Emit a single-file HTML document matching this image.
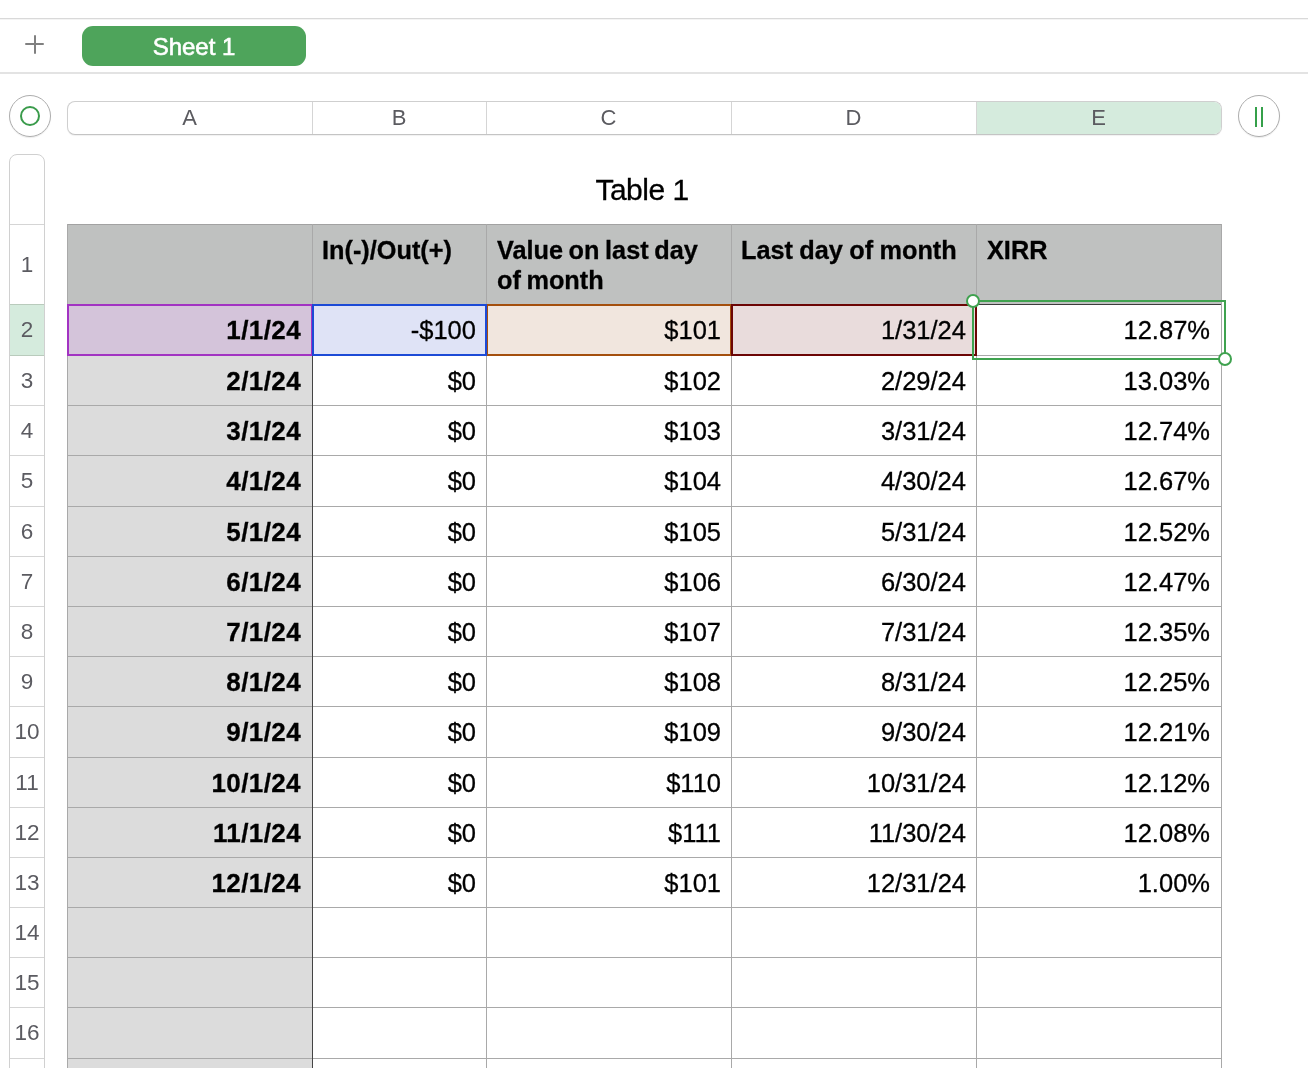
<!DOCTYPE html>
<html><head><meta charset="utf-8"><style>
html,body{margin:0;padding:0;background:#fff;width:1308px;height:1068px;overflow:hidden;position:relative;font-family:"Liberation Sans",sans-serif;}
div{position:absolute;box-sizing:border-box;}
.hl{height:1px;}
.vl{width:1px;}
.t{white-space:nowrap;color:#000;will-change:transform;-webkit-text-stroke:0.3px #000;}
.rn{left:9px;width:36px;text-align:center;font-size:22.5px;color:#5b5b61;line-height:22px;will-change:transform;}
.cl{top:104px;height:28px;text-align:center;font-size:22px;color:#5b5b60;line-height:28px;will-change:transform;}
</style></head><body>

<div class="hl" style="left:0;top:18px;width:1308px;background:#d9d9d9"></div>
<div class="hl" style="left:0;top:19px;width:1308px;background:#f4f4f4"></div>
<div style="left:0;top:72px;width:1308px;height:2px;background:#e3e3e3"></div>
<div style="left:25px;top:43px;width:19px;height:2px;background:#808080;border-radius:1px"></div>
<div style="left:34px;top:35px;width:2px;height:19px;background:#808080;border-radius:1px"></div>
<div style="left:82px;top:26px;width:224px;height:40px;background:#4ea45b;border-radius:11px;"></div>
<div class="t" style="left:82px;top:27px;width:224px;height:40px;line-height:40px;text-align:center;color:#fff;font-size:24px;font-weight:normal;-webkit-text-stroke:0.6px #fff">Sheet 1</div>
<div style="left:9px;top:95px;width:42px;height:42px;border:1.5px solid #adadad;border-radius:50%;box-shadow:0 1px 1px rgba(0,0,0,0.08)"></div>
<div style="left:20px;top:106px;width:20px;height:20px;border:2px solid #3a9b4b;border-radius:50%"></div>
<div style="left:1238px;top:95px;width:42px;height:42px;border:1.5px solid #adadad;border-radius:50%;box-shadow:0 1px 1px rgba(0,0,0,0.08)"></div>
<div style="left:1255px;top:107px;width:2px;height:20px;background:#35a04a"></div>
<div style="left:1261px;top:107px;width:2px;height:20px;background:#35a04a"></div>
<div style="left:67px;top:101px;width:1155px;height:34px;border:1px solid #cfcfcf;border-bottom-color:#c4c4c4;border-radius:8px;overflow:hidden;background:#fff;box-shadow:0 1px 1px rgba(0,0,0,0.06)"><div style="left:908px;top:0;width:245px;height:32px;background:#d5ebdd"></div></div>
<div class="vl" style="left:312px;top:102px;height:32px;background:#d5d5d5"></div>
<div class="vl" style="left:486px;top:102px;height:32px;background:#d5d5d5"></div>
<div class="vl" style="left:731px;top:102px;height:32px;background:#d5d5d5"></div>
<div class="vl" style="left:976px;top:102px;height:32px;background:#d5d5d5"></div>
<div class="cl" style="left:67px;width:245px">A</div>
<div class="cl" style="left:312px;width:174px">B</div>
<div class="cl" style="left:486px;width:245px">C</div>
<div class="cl" style="left:731px;width:245px">D</div>
<div class="cl" style="left:976px;width:245px">E</div>
<div style="left:9px;top:154px;width:36px;height:930px;border:1px solid #d0d0d0;border-top-left-radius:8px;border-top-right-radius:8px;background:#fff"></div>
<div style="left:10px;top:305px;width:34px;height:50px;background:#d5ebdd"></div>
<div class="hl" style="left:10px;top:224px;width:34px;background:#d5d5d5"></div>
<div class="hl" style="left:10px;top:304px;width:34px;background:#d5d5d5"></div>
<div class="hl" style="left:10px;top:355px;width:34px;background:#d5d5d5"></div>
<div class="hl" style="left:10px;top:405px;width:34px;background:#d5d5d5"></div>
<div class="hl" style="left:10px;top:455px;width:34px;background:#d5d5d5"></div>
<div class="hl" style="left:10px;top:506px;width:34px;background:#d5d5d5"></div>
<div class="hl" style="left:10px;top:556px;width:34px;background:#d5d5d5"></div>
<div class="hl" style="left:10px;top:606px;width:34px;background:#d5d5d5"></div>
<div class="hl" style="left:10px;top:656px;width:34px;background:#d5d5d5"></div>
<div class="hl" style="left:10px;top:706px;width:34px;background:#d5d5d5"></div>
<div class="hl" style="left:10px;top:757px;width:34px;background:#d5d5d5"></div>
<div class="hl" style="left:10px;top:807px;width:34px;background:#d5d5d5"></div>
<div class="hl" style="left:10px;top:857px;width:34px;background:#d5d5d5"></div>
<div class="hl" style="left:10px;top:907px;width:34px;background:#d5d5d5"></div>
<div class="hl" style="left:10px;top:957px;width:34px;background:#d5d5d5"></div>
<div class="hl" style="left:10px;top:1007px;width:34px;background:#d5d5d5"></div>
<div class="hl" style="left:10px;top:1058px;width:34px;background:#d5d5d5"></div>
<div class="hl" style="left:10px;top:304px;width:34px;background:#b9cbbc"></div>
<div class="hl" style="left:10px;top:355px;width:34px;background:#b9cbbc"></div>
<div class="rn" style="top:254px">1</div>
<div class="rn" style="top:319px">2</div>
<div class="rn" style="top:370px">3</div>
<div class="rn" style="top:420px">4</div>
<div class="rn" style="top:470px">5</div>
<div class="rn" style="top:521px">6</div>
<div class="rn" style="top:571px">7</div>
<div class="rn" style="top:621px">8</div>
<div class="rn" style="top:671px">9</div>
<div class="rn" style="top:721px">10</div>
<div class="rn" style="top:772px">11</div>
<div class="rn" style="top:822px">12</div>
<div class="rn" style="top:872px">13</div>
<div class="rn" style="top:922px">14</div>
<div class="rn" style="top:972px">15</div>
<div class="rn" style="top:1022px">16</div>
<div class="t" style="left:65px;width:1154px;top:172px;height:36px;line-height:36px;text-align:center;font-size:30px;letter-spacing:-0.5px">Table 1</div>
<div style="left:67px;top:224px;width:1155px;height:81px;background:#bfc1c0"></div>
<div style="left:67px;top:304px;width:246px;height:800px;background:#dcdcdc"></div>
<div class="hl" style="left:67px;top:355px;width:1155px;background:#a9a9a9"></div>
<div class="hl" style="left:67px;top:405px;width:1155px;background:#a9a9a9"></div>
<div class="hl" style="left:67px;top:455px;width:1155px;background:#a9a9a9"></div>
<div class="hl" style="left:67px;top:506px;width:1155px;background:#a9a9a9"></div>
<div class="hl" style="left:67px;top:556px;width:1155px;background:#a9a9a9"></div>
<div class="hl" style="left:67px;top:606px;width:1155px;background:#a9a9a9"></div>
<div class="hl" style="left:67px;top:656px;width:1155px;background:#a9a9a9"></div>
<div class="hl" style="left:67px;top:706px;width:1155px;background:#a9a9a9"></div>
<div class="hl" style="left:67px;top:757px;width:1155px;background:#a9a9a9"></div>
<div class="hl" style="left:67px;top:807px;width:1155px;background:#a9a9a9"></div>
<div class="hl" style="left:67px;top:857px;width:1155px;background:#a9a9a9"></div>
<div class="hl" style="left:67px;top:907px;width:1155px;background:#a9a9a9"></div>
<div class="hl" style="left:67px;top:957px;width:1155px;background:#a9a9a9"></div>
<div class="hl" style="left:67px;top:1007px;width:1155px;background:#a9a9a9"></div>
<div class="hl" style="left:67px;top:1058px;width:1155px;background:#a9a9a9"></div>
<div class="hl" style="left:67px;top:224px;width:1155px;background:#a2a2a2"></div>
<div class="hl" style="left:67px;top:304px;width:1155px;background:#3c3c3c"></div>
<div class="vl" style="left:67px;top:224px;height:844px;background:#a9a9a9"></div>
<div class="vl" style="left:312px;top:224px;height:844px;background:#a9a9a9"></div>
<div class="vl" style="left:486px;top:224px;height:844px;background:#a9a9a9"></div>
<div class="vl" style="left:731px;top:224px;height:844px;background:#a9a9a9"></div>
<div class="vl" style="left:976px;top:224px;height:844px;background:#a9a9a9"></div>
<div class="vl" style="left:1221px;top:224px;height:844px;background:#a9a9a9"></div>
<div class="vl" style="left:312px;top:304px;height:764px;background:#444"></div>
<div class="t" style="left:322px;top:235px;font-size:25.3px;font-weight:bold;line-height:30px">In(-)/Out(+)</div>
<div class="t" style="left:497px;top:235px;word-spacing:-1.5px;font-size:25.3px;font-weight:bold;line-height:30px">Value on last day<br>of month</div>
<div class="t" style="left:741px;top:235px;word-spacing:-0.7px;font-size:25.3px;font-weight:bold;line-height:30px">Last day of month</div>
<div class="t" style="left:987px;top:235px;font-size:25.3px;font-weight:bold;line-height:30px">XIRR</div>
<div style="left:67px;top:304px;width:246px;height:52px;background:#d4c4da;border:2px solid #a233c2"></div>
<div style="left:486px;top:304px;width:246px;height:52px;background:#f1e6de;border:2px solid #a44f0d"></div>
<div style="left:731px;top:304px;width:246px;height:52px;background:#e9dcdc;border:2px solid #6c0505"></div>
<div style="left:312px;top:304px;width:175px;height:52px;background:#dfe3f6;border:2px solid #1c4ad6"></div>
<div class="t" style="left:52px;width:249px;text-align:right;top:304px;height:51px;line-height:52px;font-size:26px;font-weight:bold;letter-spacing:0.4px;">1/1/24</div>
<div class="t" style="left:227px;width:249px;text-align:right;top:304px;height:51px;line-height:52px;font-size:25.5px;font-weight:normal;">-$100</div>
<div class="t" style="left:472px;width:249px;text-align:right;top:304px;height:51px;line-height:52px;font-size:25.5px;font-weight:normal;">$101</div>
<div class="t" style="left:717px;width:249px;text-align:right;top:304px;height:51px;line-height:52px;font-size:25.5px;font-weight:normal;">1/31/24</div>
<div class="t" style="left:961px;width:249px;text-align:right;top:304px;height:51px;line-height:52px;font-size:25.5px;font-weight:normal;">12.87%</div>
<div class="t" style="left:52px;width:249px;text-align:right;top:355px;height:50px;line-height:52px;font-size:26px;font-weight:bold;letter-spacing:0.4px;">2/1/24</div>
<div class="t" style="left:227px;width:249px;text-align:right;top:355px;height:50px;line-height:52px;font-size:25.5px;font-weight:normal;">$0</div>
<div class="t" style="left:472px;width:249px;text-align:right;top:355px;height:50px;line-height:52px;font-size:25.5px;font-weight:normal;">$102</div>
<div class="t" style="left:717px;width:249px;text-align:right;top:355px;height:50px;line-height:52px;font-size:25.5px;font-weight:normal;">2/29/24</div>
<div class="t" style="left:961px;width:249px;text-align:right;top:355px;height:50px;line-height:52px;font-size:25.5px;font-weight:normal;">13.03%</div>
<div class="t" style="left:52px;width:249px;text-align:right;top:405px;height:50px;line-height:52px;font-size:26px;font-weight:bold;letter-spacing:0.4px;">3/1/24</div>
<div class="t" style="left:227px;width:249px;text-align:right;top:405px;height:50px;line-height:52px;font-size:25.5px;font-weight:normal;">$0</div>
<div class="t" style="left:472px;width:249px;text-align:right;top:405px;height:50px;line-height:52px;font-size:25.5px;font-weight:normal;">$103</div>
<div class="t" style="left:717px;width:249px;text-align:right;top:405px;height:50px;line-height:52px;font-size:25.5px;font-weight:normal;">3/31/24</div>
<div class="t" style="left:961px;width:249px;text-align:right;top:405px;height:50px;line-height:52px;font-size:25.5px;font-weight:normal;">12.74%</div>
<div class="t" style="left:52px;width:249px;text-align:right;top:455px;height:51px;line-height:52px;font-size:26px;font-weight:bold;letter-spacing:0.4px;">4/1/24</div>
<div class="t" style="left:227px;width:249px;text-align:right;top:455px;height:51px;line-height:52px;font-size:25.5px;font-weight:normal;">$0</div>
<div class="t" style="left:472px;width:249px;text-align:right;top:455px;height:51px;line-height:52px;font-size:25.5px;font-weight:normal;">$104</div>
<div class="t" style="left:717px;width:249px;text-align:right;top:455px;height:51px;line-height:52px;font-size:25.5px;font-weight:normal;">4/30/24</div>
<div class="t" style="left:961px;width:249px;text-align:right;top:455px;height:51px;line-height:52px;font-size:25.5px;font-weight:normal;">12.67%</div>
<div class="t" style="left:52px;width:249px;text-align:right;top:506px;height:50px;line-height:52px;font-size:26px;font-weight:bold;letter-spacing:0.4px;">5/1/24</div>
<div class="t" style="left:227px;width:249px;text-align:right;top:506px;height:50px;line-height:52px;font-size:25.5px;font-weight:normal;">$0</div>
<div class="t" style="left:472px;width:249px;text-align:right;top:506px;height:50px;line-height:52px;font-size:25.5px;font-weight:normal;">$105</div>
<div class="t" style="left:717px;width:249px;text-align:right;top:506px;height:50px;line-height:52px;font-size:25.5px;font-weight:normal;">5/31/24</div>
<div class="t" style="left:961px;width:249px;text-align:right;top:506px;height:50px;line-height:52px;font-size:25.5px;font-weight:normal;">12.52%</div>
<div class="t" style="left:52px;width:249px;text-align:right;top:556px;height:50px;line-height:52px;font-size:26px;font-weight:bold;letter-spacing:0.4px;">6/1/24</div>
<div class="t" style="left:227px;width:249px;text-align:right;top:556px;height:50px;line-height:52px;font-size:25.5px;font-weight:normal;">$0</div>
<div class="t" style="left:472px;width:249px;text-align:right;top:556px;height:50px;line-height:52px;font-size:25.5px;font-weight:normal;">$106</div>
<div class="t" style="left:717px;width:249px;text-align:right;top:556px;height:50px;line-height:52px;font-size:25.5px;font-weight:normal;">6/30/24</div>
<div class="t" style="left:961px;width:249px;text-align:right;top:556px;height:50px;line-height:52px;font-size:25.5px;font-weight:normal;">12.47%</div>
<div class="t" style="left:52px;width:249px;text-align:right;top:606px;height:50px;line-height:52px;font-size:26px;font-weight:bold;letter-spacing:0.4px;">7/1/24</div>
<div class="t" style="left:227px;width:249px;text-align:right;top:606px;height:50px;line-height:52px;font-size:25.5px;font-weight:normal;">$0</div>
<div class="t" style="left:472px;width:249px;text-align:right;top:606px;height:50px;line-height:52px;font-size:25.5px;font-weight:normal;">$107</div>
<div class="t" style="left:717px;width:249px;text-align:right;top:606px;height:50px;line-height:52px;font-size:25.5px;font-weight:normal;">7/31/24</div>
<div class="t" style="left:961px;width:249px;text-align:right;top:606px;height:50px;line-height:52px;font-size:25.5px;font-weight:normal;">12.35%</div>
<div class="t" style="left:52px;width:249px;text-align:right;top:656px;height:50px;line-height:52px;font-size:26px;font-weight:bold;letter-spacing:0.4px;">8/1/24</div>
<div class="t" style="left:227px;width:249px;text-align:right;top:656px;height:50px;line-height:52px;font-size:25.5px;font-weight:normal;">$0</div>
<div class="t" style="left:472px;width:249px;text-align:right;top:656px;height:50px;line-height:52px;font-size:25.5px;font-weight:normal;">$108</div>
<div class="t" style="left:717px;width:249px;text-align:right;top:656px;height:50px;line-height:52px;font-size:25.5px;font-weight:normal;">8/31/24</div>
<div class="t" style="left:961px;width:249px;text-align:right;top:656px;height:50px;line-height:52px;font-size:25.5px;font-weight:normal;">12.25%</div>
<div class="t" style="left:52px;width:249px;text-align:right;top:706px;height:51px;line-height:52px;font-size:26px;font-weight:bold;letter-spacing:0.4px;">9/1/24</div>
<div class="t" style="left:227px;width:249px;text-align:right;top:706px;height:51px;line-height:52px;font-size:25.5px;font-weight:normal;">$0</div>
<div class="t" style="left:472px;width:249px;text-align:right;top:706px;height:51px;line-height:52px;font-size:25.5px;font-weight:normal;">$109</div>
<div class="t" style="left:717px;width:249px;text-align:right;top:706px;height:51px;line-height:52px;font-size:25.5px;font-weight:normal;">9/30/24</div>
<div class="t" style="left:961px;width:249px;text-align:right;top:706px;height:51px;line-height:52px;font-size:25.5px;font-weight:normal;">12.21%</div>
<div class="t" style="left:52px;width:249px;text-align:right;top:757px;height:50px;line-height:52px;font-size:26px;font-weight:bold;letter-spacing:0.4px;">10/1/24</div>
<div class="t" style="left:227px;width:249px;text-align:right;top:757px;height:50px;line-height:52px;font-size:25.5px;font-weight:normal;">$0</div>
<div class="t" style="left:472px;width:249px;text-align:right;top:757px;height:50px;line-height:52px;font-size:25.5px;font-weight:normal;">$110</div>
<div class="t" style="left:717px;width:249px;text-align:right;top:757px;height:50px;line-height:52px;font-size:25.5px;font-weight:normal;">10/31/24</div>
<div class="t" style="left:961px;width:249px;text-align:right;top:757px;height:50px;line-height:52px;font-size:25.5px;font-weight:normal;">12.12%</div>
<div class="t" style="left:52px;width:249px;text-align:right;top:807px;height:50px;line-height:52px;font-size:26px;font-weight:bold;letter-spacing:0.4px;">11/1/24</div>
<div class="t" style="left:227px;width:249px;text-align:right;top:807px;height:50px;line-height:52px;font-size:25.5px;font-weight:normal;">$0</div>
<div class="t" style="left:472px;width:249px;text-align:right;top:807px;height:50px;line-height:52px;font-size:25.5px;font-weight:normal;">$111</div>
<div class="t" style="left:717px;width:249px;text-align:right;top:807px;height:50px;line-height:52px;font-size:25.5px;font-weight:normal;">11/30/24</div>
<div class="t" style="left:961px;width:249px;text-align:right;top:807px;height:50px;line-height:52px;font-size:25.5px;font-weight:normal;">12.08%</div>
<div class="t" style="left:52px;width:249px;text-align:right;top:857px;height:50px;line-height:52px;font-size:26px;font-weight:bold;letter-spacing:0.4px;">12/1/24</div>
<div class="t" style="left:227px;width:249px;text-align:right;top:857px;height:50px;line-height:52px;font-size:25.5px;font-weight:normal;">$0</div>
<div class="t" style="left:472px;width:249px;text-align:right;top:857px;height:50px;line-height:52px;font-size:25.5px;font-weight:normal;">$101</div>
<div class="t" style="left:717px;width:249px;text-align:right;top:857px;height:50px;line-height:52px;font-size:25.5px;font-weight:normal;">12/31/24</div>
<div class="t" style="left:961px;width:249px;text-align:right;top:857px;height:50px;line-height:52px;font-size:25.5px;font-weight:normal;">1.00%</div>
<div style="left:972px;top:300px;width:254px;height:60px;border:2px solid #3fa24f"></div>
<div style="left:966px;top:294px;width:14px;height:14px;border:2px solid #3fa24f;border-radius:50%;background:#fff"></div>
<div style="left:1218px;top:352px;width:14px;height:14px;border:2px solid #3fa24f;border-radius:50%;background:#fff"></div>
</body></html>
